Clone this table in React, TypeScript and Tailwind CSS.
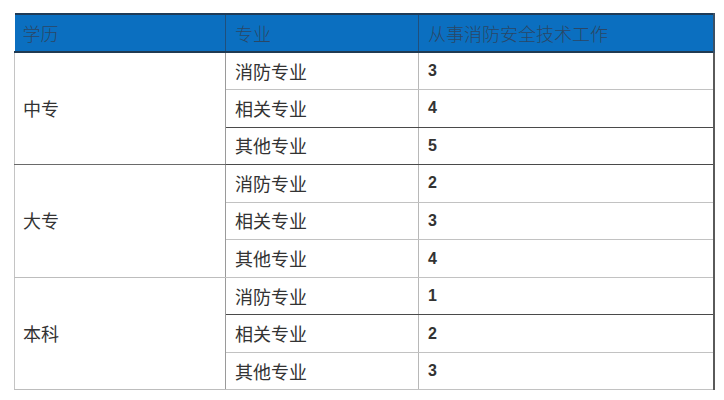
const groups = [
  { name: "中专", rows: [["消防专业", "3"], ["相关专业", "4"], ["其他专业", "5"]] },
  { name: "大专", rows: [["消防专业", "2"], ["相关专业", "3"], ["其他专业", "4"]] },
  { name: "本科", rows: [["消防专业", "1"], ["相关专业", "2"], ["其他专业", "3"]] },
];

// which body row lines (bottom borders) are dark in the picture
const darkBottom: Record<string, boolean> = { "0-1": true, "2-0": true };

export default function App() {
  return (
    <div
      className="w-[724px] h-[400px] bg-white pt-[13px] pl-[14px]"
      style={{ fontFamily: '"Noto Sans CJK SC", "Liberation Sans", sans-serif' }}
    >
      <table className="w-[699px] border-collapse table-fixed text-[18px] text-[#333]">
        <colgroup>
          <col className="w-[211px]" />
          <col className="w-[193px]" />
          <col className="w-[295px]" />
        </colgroup>
        <thead>
          <tr className="h-[38px] bg-[#0b6fc0] border-t-2 border-t-[#1f3b57] border-b-2 border-b-[#203a52] text-[#2a4766]">
            <th className="text-left font-light pl-[8px] border-r border-r-[#1f4f7c]">学历</th>
            <th className="text-left font-light pl-[9px] border-r border-r-[#1f4f7c]">专业</th>
            <th className="text-left font-light pl-[9px] border-r-2 border-r-[#3b5066]">
              从事消防安全技术工作
            </th>
          </tr>
        </thead>
        <tbody>
          {groups.map((g, gi) =>
            g.rows.map(([major, num], ri) => {
              const last = ri === g.rows.length - 1;
              const dark = darkBottom[`${gi}-${ri}`] || (last && gi === 0);
              return (
                <tr key={`${gi}-${ri}`} className="h-[37.55px]">
                  {ri === 0 && (
                    <td
                      rowSpan={g.rows.length}
                      className={`pl-[8px] border-l border-l-[#c4c4c4] border-r border-r-[#9a9a9a] border-b ${
                        gi === 0 ? "border-b-[#6a6a6a]" : "border-b-[#bdbdbd]"
                      }`}
                    >
                      {g.name}
                    </td>
                  )}
                  <td
                    className={`pl-[9px] border-r border-r-[#b8b8b8] border-b ${
                      dark ? "border-b-[#4a4a4a]" : "border-b-[#c2c2c2]"
                    }`}
                  >
                    {major}
                  </td>
                  <td
                    className={`pl-[9px] border-r-2 border-r-[#5a5a5a] border-b font-bold text-[16px] text-[#333] ${
                      dark ? "border-b-[#4a4a4a]" : "border-b-[#c2c2c2]"
                    }`}
                    style={{ fontFamily: '"Liberation Sans", Arial, sans-serif' }}
                  >
                    {num}
                  </td>
                </tr>
              );
            })
          )}
        </tbody>
      </table>
    </div>
  );
}
